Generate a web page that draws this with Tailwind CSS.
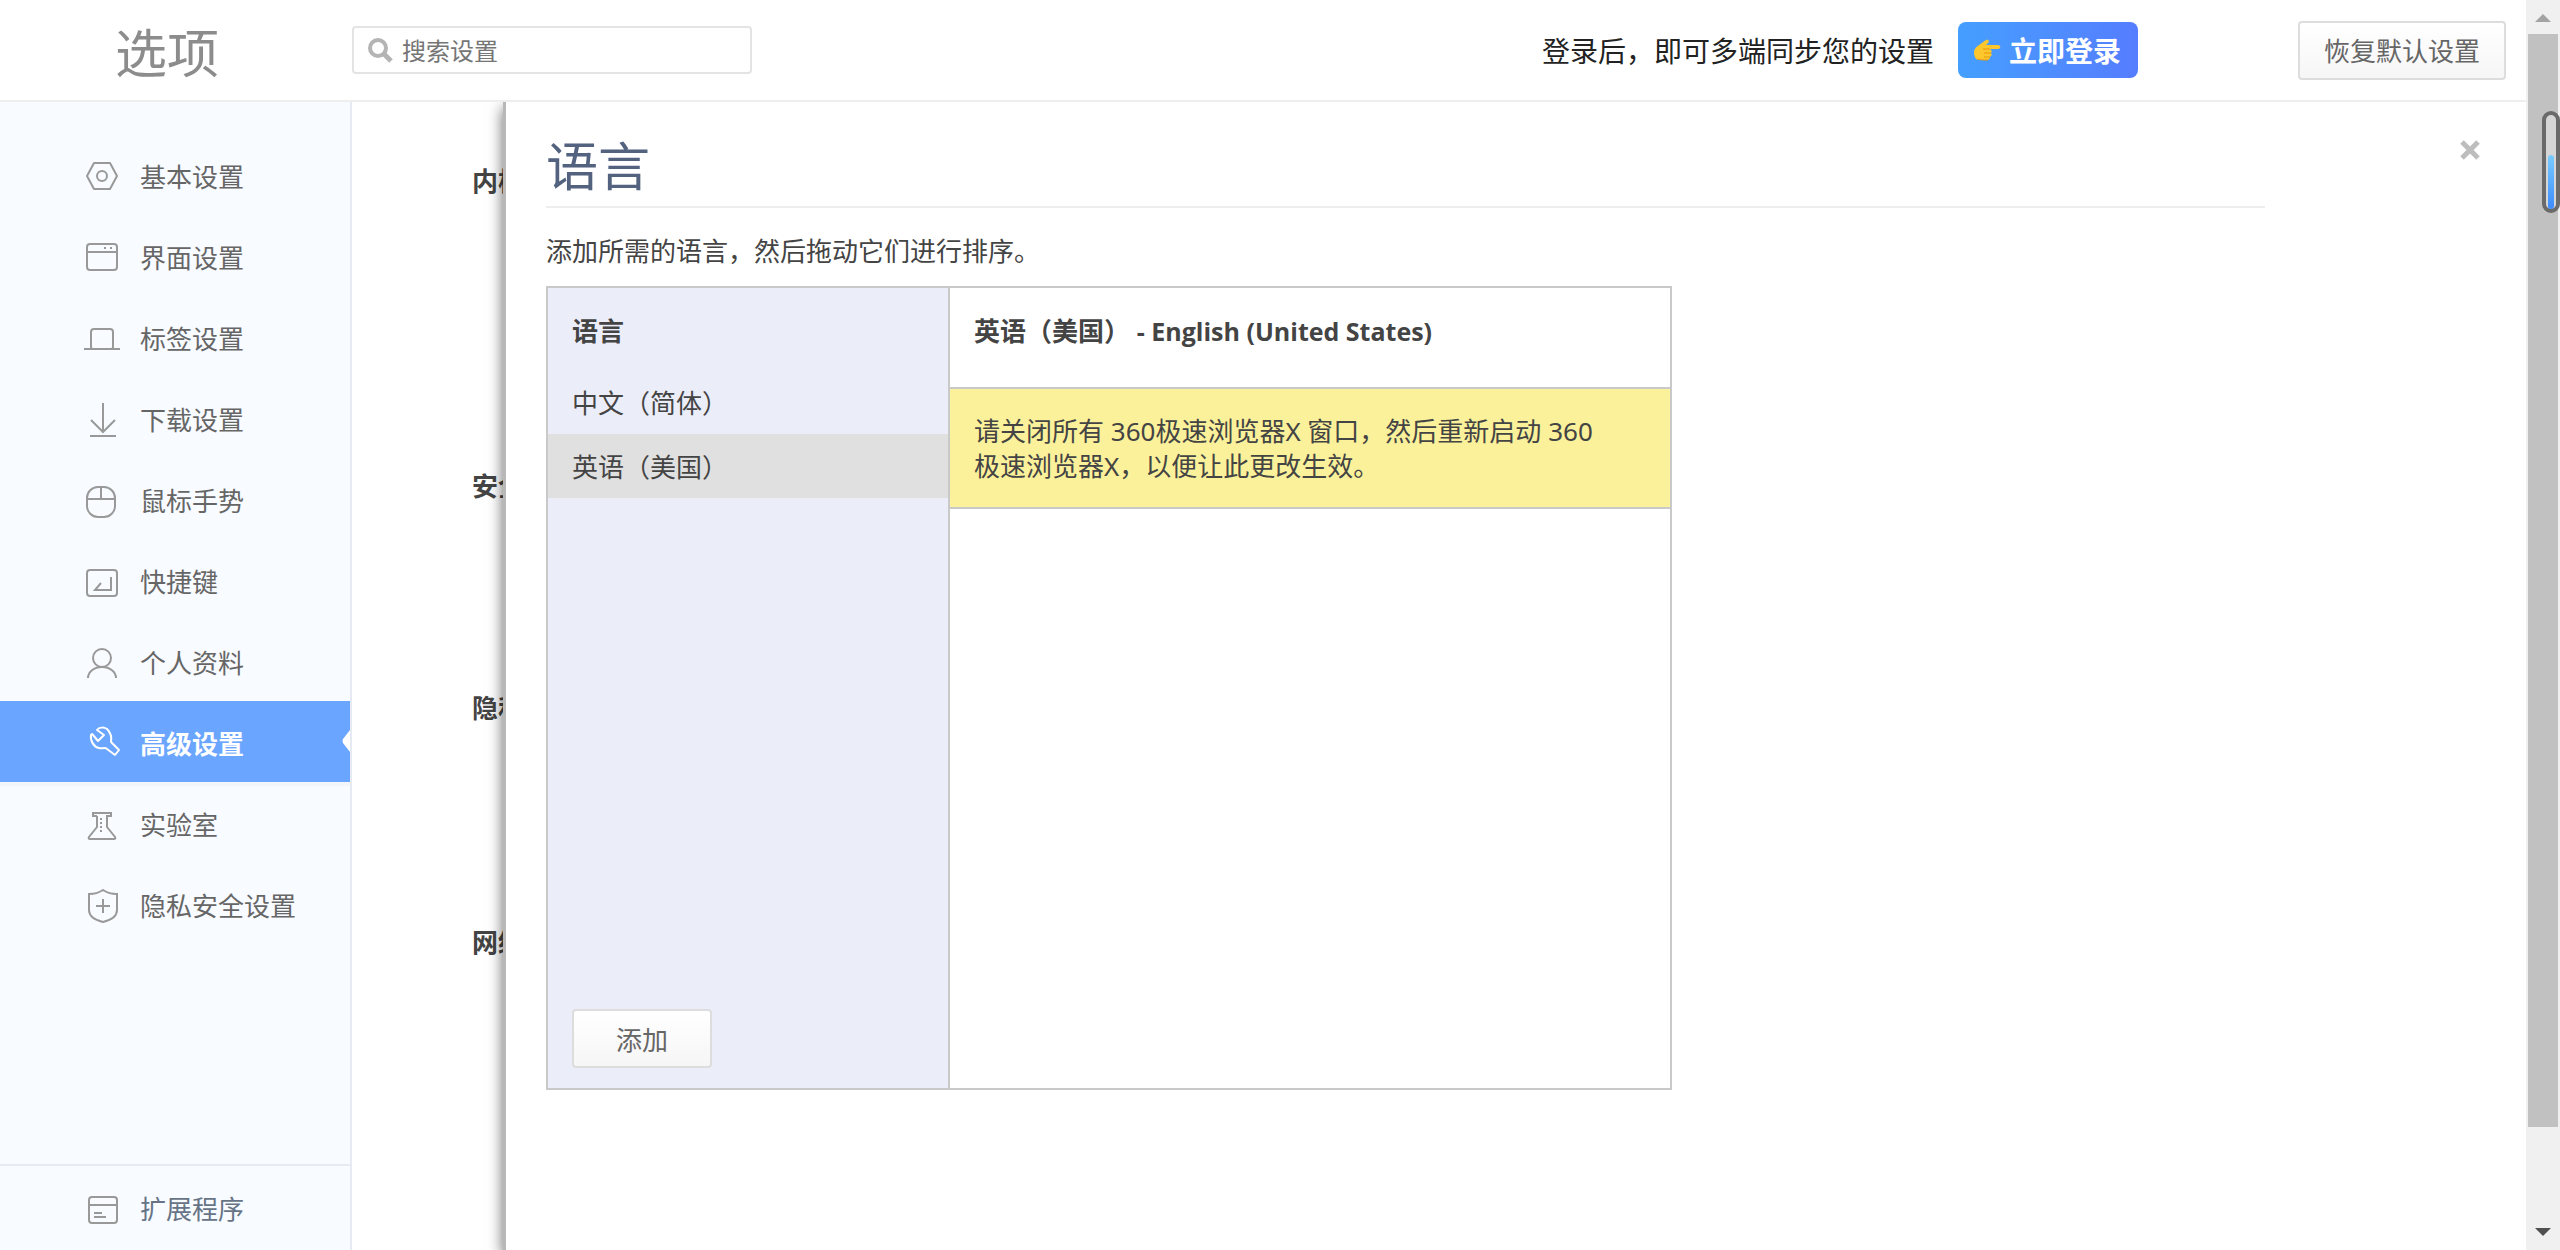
<!DOCTYPE html>
<html lang="zh-CN">
<head>
    <meta charset="UTF-8">
    <title>选项</title>
    <script src="https://cdn.jsdelivr.net/npm/@tailwindcss/browser@4"></script>
</head>
<body class="flex h-screen overflow-hidden bg-white font-['Noto_Sans','Noto_Sans_CJK_SC',sans-serif] text-[26px] leading-9 text-[#444]">
    <div class="flex min-w-0 flex-1 flex-col">
        <!-- Header -->
        <header class="flex h-[102px] shrink-0 items-center border-b-2 border-[#eee] pr-5">
            <h1 class="w-[352px] shrink-0 pt-1.5 pl-[115px] text-[52px] leading-[64px] text-[#8c8c8c]">选项</h1>
            <label class="flex h-12 w-[400px] shrink-0 items-center rounded border-2 border-[#e4e4e4] pl-3">
                <svg class="h-7 w-7 shrink-0" viewBox="0 0 28 28" fill="none" stroke="#b4b4b4" stroke-width="4">
                    <circle cx="12" cy="12" r="8"/>
                    <path d="M18 18l7 7" stroke-width="5"/>
                </svg>
                <input type="text" aria-label="搜索设置" placeholder="搜索设置" class="ml-2 min-w-0 flex-1 pt-0.5 text-2xl leading-8 outline-none placeholder:text-[#757575]">
            </label>
            <div class="ml-auto flex items-center">
                <span class="pt-0.5 text-[28px] text-[#222]">登录后，即可多端同步您的设置</span>
                <button class="ml-6 flex h-14 w-[180px] items-center rounded-lg bg-linear-to-r from-[#449fff] to-[#557dff] pl-[15px] text-[28px] font-bold text-white">
                    <svg class="mr-2 h-7 w-7" viewBox="0 0 28 28">
                        <path d="M1 16c0-3 2-5 5-7l7-5c2-1 4 1 2 3l-2 2h12c3 0 3 4 0 4h-8c2 1 2 3 1 4 1 1 1 3-1 4 0 2-1 3-3 3H6c-3 0-5-3-5-8z" fill="#fcc72c"/>
                        <path d="M10 13h7M11 17h7M11 21h6M4 23c3 1 7 1 11 1" stroke="#e8960c" stroke-width="1" fill="none"/>
                    </svg>
                    <span class="pt-0.5">立即登录</span>
                </button>
                <button class="ml-40 h-[59px] w-[208px] rounded border-2 border-[#ddd] bg-linear-to-b from-white to-[#f6f6f6] pt-0.5 text-[#666]">恢复默认设置</button>
            </div>
        </header>

        <div class="flex min-h-0 flex-1">
            <!-- Sidebar -->
            <nav class="flex w-[352px] shrink-0 flex-col border-r-2 border-[#e6eaf2] bg-[#f8fbff] pt-8 text-[#666]">
                <a href="#" class="flex h-[81px] items-center gap-5 pl-[84px]">
                    <svg class="h-[37px] w-9 overflow-visible" viewBox="0 0 36 37" fill="none" stroke="#999" stroke-width="2">
                        <path d="M3 20L10 7H26L33 20L26 33H10Z" stroke-linejoin="round"/>
                        <circle cx="18" cy="20" r="5"/>
                    </svg>
                    <span class="pt-1">基本设置</span>
                </a>
                <a href="#" class="flex h-[81px] items-center gap-5 pl-[84px]">
                    <svg class="h-[37px] w-9 overflow-visible" viewBox="0 0 36 37" fill="none" stroke="#999" stroke-width="2">
                        <rect x="3" y="7" width="30" height="26" rx="3"/>
                        <path d="M3 15H33M20 11h2M26 11h2"/>
                    </svg>
                    <span class="pt-1">界面设置</span>
                </a>
                <a href="#" class="flex h-[81px] items-center gap-5 pl-[84px]">
                    <svg class="h-[37px] w-9 overflow-visible" viewBox="0 0 36 37" fill="none" stroke="#999" stroke-width="2">
                        <path d="M9 31q-2 0-2-2V14q0-3 3-3H26q3 0 3 3V29q0 2-2 2M0 31H36"/>
                    </svg>
                    <span class="pt-1">标签设置</span>
                </a>
                <a href="#" class="flex h-[81px] items-center gap-5 pl-[84px]">
                    <svg class="h-[37px] w-9 overflow-visible" viewBox="0 0 36 37" fill="none" stroke="#999" stroke-width="2">
                        <path d="M19 4V33M7 21L19 33L31 21M6 37H32"/>
                    </svg>
                    <span class="pt-1">下载设置</span>
                </a>
                <a href="#" class="flex h-[81px] items-center gap-5 pl-[84px]">
                    <svg class="h-[37px] w-9 overflow-visible" viewBox="0 0 36 37" fill="none" stroke="#999" stroke-width="2">
                        <rect x="3" y="7" width="28" height="30" rx="11"/>
                        <path d="M3 19H31M17 7V19"/>
                    </svg>
                    <span class="pt-1">鼠标手势</span>
                </a>
                <a href="#" class="flex h-[81px] items-center gap-5 pl-[84px]">
                    <svg class="h-[37px] w-9 overflow-visible" viewBox="0 0 36 37" fill="none" stroke="#999" stroke-width="2">
                        <rect x="3" y="9" width="30" height="26" rx="3"/>
                        <path d="M17 22L11 29H27V16"/>
                    </svg>
                    <span class="pt-1">快捷键</span>
                </a>
                <a href="#" class="flex h-[81px] items-center gap-5 pl-[84px]">
                    <svg class="h-[37px] w-9 overflow-visible" viewBox="0 0 36 37" fill="none" stroke="#999" stroke-width="2">
                        <circle cx="18" cy="16" r="9"/>
                        <path d="M4 36C4 30 10 25 18 25S32 30 32 36"/>
                    </svg>
                    <span class="pt-1">个人资料</span>
                </a>
                <a href="#" class="relative flex h-[81px] items-center gap-5 bg-[#6aa6ff] pl-[84px] font-bold text-white shadow-[0_4px_0_#f3f5f8]">
                    <svg class="h-[37px] w-9 overflow-visible" viewBox="0 0 36 37" fill="none" stroke="#fff" stroke-width="2" stroke-linejoin="round">
                        <path d="M13 7L20 12L14 18L9 12Q8 10 7 12C6 18 10 24 15 25C18 26 21 24 23 26L31 32L35 27L27 19C28 14 26 9 23 6C20 4 15 4 13 7Z"/>
                    </svg>
                    <span class="pt-1">高级设置</span>
                    <svg class="absolute top-7 right-0 h-6 w-2" viewBox="0 0 8 24"><path d="M8 1V23L1 14Q0 12 1 10Z" fill="#fff"/></svg>
                </a>
                <a href="#" class="flex h-[81px] items-center gap-5 pl-[84px]">
                    <svg class="h-[37px] w-9 overflow-visible" viewBox="0 0 36 37" fill="none" stroke="#999" stroke-width="2">
                        <path d="M13 12H9V9H27V12H23V23L31 33Q32 35 30 35H6Q4 35 5 33L13 23V12"/>
                        <path d="M17 14V28" stroke-dasharray="2 2"/>
                    </svg>
                    <span class="pt-1">实验室</span>
                </a>
                <a href="#" class="flex h-[81px] items-center gap-5 pl-[84px]">
                    <svg class="h-[37px] w-9 overflow-visible" viewBox="0 0 36 37" fill="none" stroke="#999" stroke-width="2">
                        <path d="M19 5Q13 9 5 9V25C5 31 11 35 19 37C27 35 33 31 33 25V9Q25 9 19 5ZM19 14V28M12 21H26"/>
                    </svg>
                    <span class="pt-1">隐私安全设置</span>
                </a>
                <a href="#" class="mt-auto flex h-[86px] items-center gap-5 border-t-2 border-[#e6eaf2] pl-[84px] text-[#667485]">
                    <svg class="h-9 w-9" viewBox="0 0 36 36" fill="none" stroke="#999" stroke-width="2">
                        <rect x="5" y="7" width="28" height="26" rx="3"/>
                        <path d="M5 15H33M10 23H18M10 27H22"/>
                    </svg>
                    <span class="pt-0.5">扩展程序</span>
                </a>
            </nav>

            <!-- Settings page, mostly covered by the language dialog -->
            <main class="relative min-w-0 flex-1 overflow-hidden">
                <div class="pt-[61px] pl-[120px] font-bold">
                    <h2 class="h-[305px]">内核</h2>
                    <h2 class="h-[222px]">安全</h2>
                    <h2 class="h-[234px]">隐私</h2>
                    <h2>网络</h2>
                </div>

                <section role="dialog" aria-labelledby="langTitle" class="absolute inset-y-0 right-0 left-[151px] border-l-[3px] border-[#b8b8b8] bg-white pl-10 shadow-[0_6px_14px_rgba(0,0,0,0.6)]">
                    <button aria-label="关闭" class="absolute top-9 right-[44px] p-px">
                        <svg class="h-[22px] w-[22px]" viewBox="0 0 22 22" stroke="#bdbdbd" stroke-width="5"><path d="M3 3L19 19M19 3L3 19"/></svg>
                    </button>
                    <h2 id="langTitle" class="mr-[261px] border-b-2 border-[#eee] pt-8 pb-2 text-[52px] leading-[64px] text-[#53637f]">语言</h2>
                    <p class="pt-[25px] pb-[17px]">添加所需的语言，然后拖动它们进行排序。</p>

                    <div class="flex h-[804px] w-[1126px] border-2 border-[#c9c9c9]">
                        <div class="flex w-[402px] shrink-0 flex-col border-r-2 border-[#c9c9c9] bg-[#ebeef9]">
                            <h3 class="px-6 pt-[25px] pb-[21px] font-bold">语言</h3>
                            <ul>
                                <li><button class="h-16 w-full px-6 pt-px text-left">中文（简体）</button></li>
                                <li><button class="h-16 w-full bg-[#e0e0e0] px-6 pt-px text-left">英语（美国）</button></li>
                            </ul>
                            <button class="mt-auto mb-5 ml-6 h-[59px] w-[140px] rounded border-2 border-[#ddd] bg-linear-to-b from-white to-[#f6f6f6] pt-0.5 text-[#666]">添加</button>
                        </div>
                        <div class="flex-1">
                            <h3 class="px-6 pt-[25px] pb-[38px] font-bold">英语（美国） <span class="font-['Open_Sans',sans-serif] text-[25px]">- English (United States)</span></h3>
                            <p class="border-y-2 border-[#c9c9c9] bg-[#fbf19a] px-6 pt-[25px] pb-[23px] leading-[35px]">请关闭所有 360极速浏览器X 窗口，然后重新启动 360<br>极速浏览器X，以便让此更改生效。</p>
                        </div>
                    </div>
                </section>
            </main>
        </div>
    </div>

    <!-- Scrollbar -->
    <div class="relative flex w-[34px] shrink-0 flex-col items-center bg-[#f0f0f0]">
        <svg class="h-[34px] w-[34px] shrink-0" viewBox="0 0 34 34"><path d="M9 22L17 14L25 22Z" fill="#a3a3a3"/></svg>
        <div class="flex min-h-0 w-[30px] flex-1 flex-col">
            <div class="h-[92.5%] bg-[#c1c1c1]"></div>
        </div>
        <svg class="h-[34px] w-[34px] shrink-0" viewBox="0 0 34 34"><path d="M9 12L17 20L25 12Z" fill="#505050"/></svg>
        <div class="absolute top-[111px] right-0 flex h-[102px] w-[18px] flex-col justify-end rounded-full border-4 border-[#6a6a6a] bg-[#d6d6d6] p-0.5 pb-0">
            <div class="h-[54px] rounded-full bg-linear-to-b from-[#7accff] to-[#3d8bff]"></div>
        </div>
    </div>
</body>
</html>
